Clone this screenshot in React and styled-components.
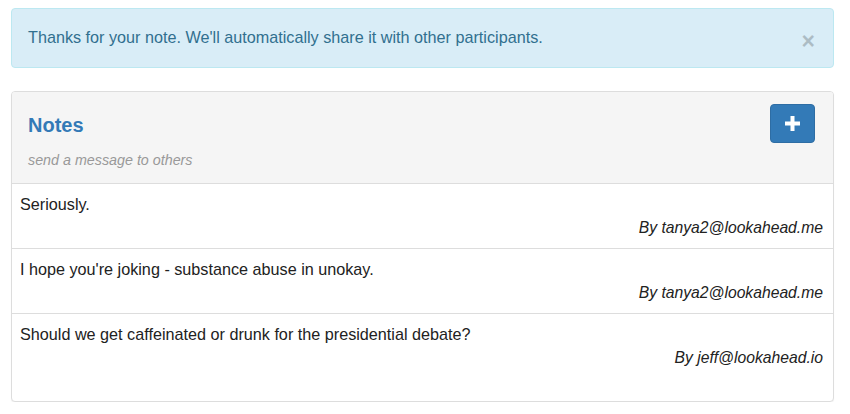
import React from "react";
import styled, { createGlobalStyle } from "styled-components";

const Global = createGlobalStyle`
  html, body { margin: 0; padding: 0; background: #fff; }
  body { font-family: "Liberation Sans", Arial, Helvetica, sans-serif; color: #333; }
  * { box-sizing: border-box; }
`;

const Page = styled.div`
  padding: 8px 16px 0 11px;
`;

const Alert = styled.div`
  display: flex;
  align-items: flex-start;
  justify-content: space-between;
  background: #d9edf7;
  border: 1px solid #bce8f1;
  border-radius: 4px;
  color: #31708f;
  padding: 17px 18px 19px 16px;
  font-size: 16.2px;
  line-height: 22px;
`;

const Close = styled.button`
  border: 0;
  background: transparent;
  padding: 0;
  height: 22px;
  margin: 4px 0 -4px;
  font-family: "Liberation Sans", Arial, sans-serif;
  font-size: 23px;
  font-weight: bold;
  line-height: 22px;
  color: #000;
  opacity: 0.2;
  cursor: pointer;
`;

const Panel = styled.div`
  margin-top: 23px;
  border: 1px solid #ddd;
  border-radius: 4px;
  box-shadow: 0 1px 1px rgba(0, 0, 0, 0.05);
  overflow: hidden;
  background: #fff;
`;

const Heading = styled.div`
  display: flex;
  justify-content: space-between;
  align-items: flex-start;
  background: #f5f5f5;
  border-bottom: 1px solid #ddd;
  padding: 12px 18px 13px 16px;
`;

const TitleBlock = styled.div`
  display: flex;
  flex-direction: column;
`;

const Title = styled.h3`
  margin: 10px 0 0;
  font-size: 20px;
  line-height: 22px;
  font-weight: bold;
  color: #337ab7;
`;

const Subtitle = styled.div`
  margin-top: 14px;
  font-size: 14.3px;
  line-height: 20px;
  font-style: italic;
  color: #999;
`;

const AddButton = styled.button`
  width: 45px;
  height: 39px;
  display: flex;
  align-items: center;
  justify-content: center;
  background: #337ab7;
  border: 1px solid #2e6da4;
  border-radius: 4px;
  padding: 0;
  cursor: pointer;
`;

const List = styled.div`
  padding-bottom: 23px;
`;

const Row = styled.div`
  border-top: ${(p) => (p.$first ? "0" : "1px solid #ddd")};
  padding: 9px 10px 9px 8px;
  font-size: 16.2px;
  line-height: 22px;
  color: #222;
`;

const Author = styled.div`
  margin-top: 2px;
  text-align: right;
  font-style: italic;
  font-size: 15.7px;
`;

const notes = [
  { text: "Seriously.", by: "tanya2@lookahead.me" },
  { text: "I hope you're joking - substance abuse in unokay.", by: "tanya2@lookahead.me" },
  { text: "Should we get caffeinated or drunk for the presidential debate?", by: "jeff@lookahead.io" },
];

export default function App() {
  return (
    <Page>
      <Global />
      <Alert>
        <span>Thanks for your note. We'll automatically share it with other participants.</span>
        <Close aria-label="Close">×</Close>
      </Alert>
      <Panel>
        <Heading>
          <TitleBlock>
            <Title>Notes</Title>
            <Subtitle>send a message to others</Subtitle>
          </TitleBlock>
          <AddButton aria-label="Add note">
            <svg width="15" height="15" viewBox="0 0 15 15">
              <rect x="5.5" y="0" width="4" height="15" fill="#fff" />
              <rect x="0" y="5.5" width="15" height="4" fill="#fff" />
            </svg>
          </AddButton>
        </Heading>
        <List>
          {notes.map((n, i) => (
            <Row key={i} $first={i === 0}>
              <div>{n.text}</div>
              <Author>By {n.by}</Author>
            </Row>
          ))}
        </List>
      </Panel>
    </Page>
  );
}
